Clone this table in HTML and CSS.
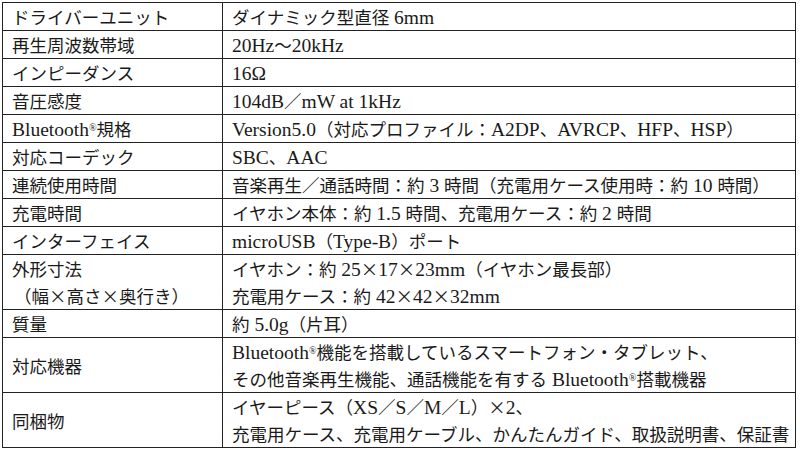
FILE: index.html
```html
<!DOCTYPE html>
<html lang="ja">
<head>
<meta charset="utf-8">
<link rel="stylesheet" href="styles.css">
</head>
<body>
<table class="spec">
<tr><th>ドライバーユニット</th><td>ダイナミック型直径<span class="en"> 6mm</span></td></tr>
<tr><th>再生周波数帯域</th><td><span class="en">20Hz</span>～<span class="en">20kHz</span></td></tr>
<tr><th>インピーダンス</th><td><span class="en">16Ω</span></td></tr>
<tr><th>音圧感度</th><td><span class="en">104dB</span>／<span class="en">mW at 1kHz</span></td></tr>
<tr><th><span class="en">Bluetooth</span><sup class="reg">®</sup>規格</th><td><span class="en">Version5.0</span>（対応プロファイル：<span class="en">A2DP</span>、<span class="en">AVRCP</span>、<span class="en">HFP</span>、<span class="en">HSP</span>）</td></tr>
<tr><th>対応コーデック</th><td><span class="en">SBC</span>、<span class="en">AAC</span></td></tr>
<tr><th>連続使用時間</th><td>音楽再生／通話時間：約<span class="en"> 3 </span>時間（充電用ケース使用時：約<span class="en"> 10 </span>時間）</td></tr>
<tr><th>充電時間</th><td>イヤホン本体：約<span class="en"> 1.5 </span>時間、充電用ケース：約<span class="en"> 2 </span>時間</td></tr>
<tr><th>インターフェイス</th><td><span class="en">microUSB</span>（<span class="en">Type-B</span>）ポート</td></tr>
<tr><th class="top">外形寸法<br><span class="indent">（幅<span class="zw">×</span>高さ<span class="zw">×</span>奥行き）</span></th><td>イヤホン：約<span class="en"> 25</span><span class="zw">×</span><span class="en">17</span><span class="zw">×</span><span class="en">23mm</span>（イヤホン最長部）<br>充電用ケース：約<span class="en"> 42</span><span class="zw">×</span><span class="en">42</span><span class="zw">×</span><span class="en">32mm</span></td></tr>
<tr><th>質量</th><td>約<span class="en"> 5.0g</span>（片耳）</td></tr>
<tr><th>対応機器</th><td><span class="en">Bluetooth</span><sup class="reg">®</sup>機能を搭載しているスマートフォン・タブレット、<br>その他音楽再生機能、通話機能を有する<span class="en"> Bluetooth</span><sup class="reg">®</sup>搭載機器</td></tr>
<tr><th>同梱物</th><td>イヤーピース（<span class="en">XS</span>／<span class="en">S</span>／<span class="en">M</span>／<span class="en">L</span>）<span class="zw">×</span><span class="en">2</span>、<br>充電用ケース、充電用ケーブル、かんたんガイド、取扱説明書、保証書</td></tr>
</table>
</body>
</html>
```

FILE: styles.css
```css
html, body {
  margin: 0;
  padding: 0;
  background: #ffffff;
}
body {
  padding: 2px 0 0 2px;
  font-family: "Noto Sans CJK JP", sans-serif;
  font-size: 17.5px;
  color: #1a1a1a;
}
.spec {
  border-collapse: collapse;
  width: 794px;
  table-layout: fixed;
}
.spec th, .spec td {
  border: 1px solid #222222;
  padding: 0 0 0 9px;
  line-height: 27px;
  text-align: left;
  font-weight: normal;
  vertical-align: middle;
  white-space: nowrap;
}
.spec th {
  width: 210px;
}
.spec th.top {
  vertical-align: top;
}
.en {
  font-family: "Liberation Serif", serif;
  font-size: 19.5px;
  line-height: 1;
}
.indent {
  padding-left: 2px;
}
.zw {
  display: inline-block;
  width: 1em;
  text-align: center;
  line-height: 1;
}
.reg {
  font-family: "Liberation Serif", serif;
  font-size: 10px;
  vertical-align: 5px;
  line-height: 0;
}
```
